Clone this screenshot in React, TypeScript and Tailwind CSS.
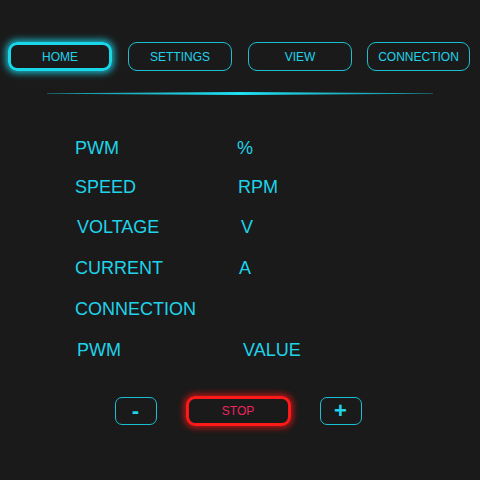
import React, { useState } from 'react';

const font = { fontFamily: '"Liberation Sans", Arial, sans-serif' };

const tabs = ['HOME', 'SETTINGS', 'VIEW', 'CONNECTION'];

// rows of the readout table: label, unit, offsets to match the layout
const rows = [
  { label: 'PWM', unit: '%', h: 'h-[39px]', ux: 'pl-[1px]' },
  { label: 'SPEED', unit: 'RPM', h: 'h-[39px]', ux: 'pl-[2px]' },
  { label: 'VOLTAGE', unit: 'V', h: 'h-[41px]', ux: 'pl-[5px]' },
  { label: 'CURRENT', unit: 'A', h: 'h-[41px]', ux: 'pl-[3px]' },
  { label: 'CONNECTION', unit: '', h: 'h-[41px]', ux: 'pl-[3px]' },
  { label: 'PWM', unit: 'VALUE', h: 'h-[40px]', ux: 'pl-[7px]' },
];

export default function App() {
  const [active, setActive] = useState('HOME');

  return (
    <div className="w-[480px] h-[480px] bg-[#1a1a1a] text-[#1fd3ea] overflow-hidden" style={font}>
      {/* top navigation */}
      <div className="flex pt-[42px] pl-[8px] gap-[16px]">
        {tabs.map((t, i) => (
          <button
            key={t}
            onClick={() => setActive(t)}
            className={
              (i === 3 ? 'w-[103px] -ml-[1px] ' : 'w-[104px] ') +
              'h-[29px] rounded-[9px] flex items-center justify-center text-[12px] leading-none ' +
              (active === t
                ? 'border-[3px] border-[#19d6e8] shadow-[0_0_7px_2px_rgba(25,214,232,0.85)]'
                : 'border-[1.5px] border-[#1bbfd2]')
            }
          >
            {t}
          </button>
        ))}
      </div>

      {/* divider */}
      <div className="mt-[21px] ml-[47px] w-[386px] h-[3px] bg-gradient-to-r from-[#1cd8ee]/60 via-[#1fe0f5] to-[#1cd8ee]/60 [clip-path:polygon(0_40%,50%_0,100%_40%,100%_60%,50%_100%,0_60%)]" />

      {/* readouts */}
      <div className="mt-[34px] flex flex-col text-[18px]">
        {rows.map((r, i) => (
          <div key={i} className={r.h + ' flex items-center'}>
            <div className={(i === 2 || i === 5 ? 'pl-[77px]' : 'pl-[75px]') + ' w-[236px]'}>{r.label}</div>
            <div className={r.ux}>{r.unit}</div>
          </div>
        ))}
      </div>

      {/* controls */}
      <div className="mt-[26px] flex justify-center items-center gap-[29px] pr-[4px]">
        <button className="w-[42px] h-[28px] rounded-[7px] border-[1.5px] border-[#1bbfd2] flex items-center justify-center text-[22px] font-bold leading-none">
          -
        </button>
        <button className="w-[105px] h-[30px] rounded-[9px] border-[3px] border-[#ff1a1a] shadow-[0_0_6px_2px_rgba(255,20,20,0.7)] flex items-center justify-center text-[12px] leading-none text-[#f0245e]">
          STOP
        </button>
        <button className="w-[42px] h-[28px] rounded-[7px] border-[1.5px] border-[#1bbfd2] flex items-center justify-center text-[22px] font-bold leading-none">
          +
        </button>
      </div>
    </div>
  );
}
